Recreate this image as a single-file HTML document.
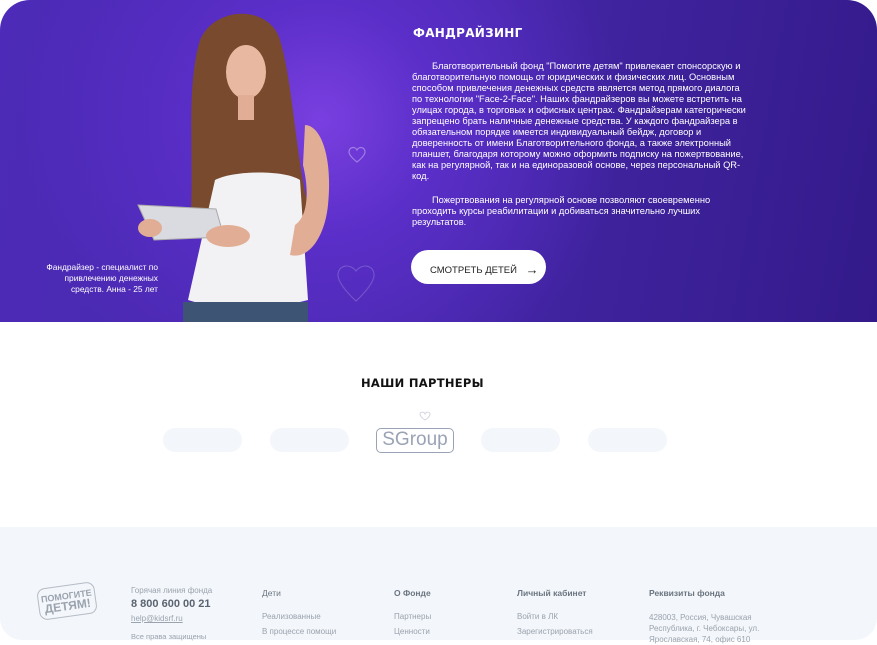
<!DOCTYPE html>
<html><head><meta charset="utf-8"><style>
*{margin:0;padding:0;box-sizing:border-box}
body{width:877px;height:640px;overflow:hidden;background:#fff;font-family:"Liberation Sans","DejaVu Sans",sans-serif;position:relative}
.hero{position:absolute;left:0;top:0;width:877px;height:322px;border-radius:30px 30px 0 0;overflow:hidden;
background:radial-gradient(circle at 320px 120px,#7a3fe0 0,#5a2ec8 120px,rgba(80,40,180,0) 300px),linear-gradient(100deg,#4d2bb8 0%,#4527a8 50%,#331a8a 100%)}
.t{position:absolute;color:#fff}
h2{position:absolute;font-family:"DejaVu Sans",sans-serif;font-weight:900;letter-spacing:.3px}
.p{position:absolute;left:412px;width:336px;font-size:9.3px;line-height:11px;color:#fff}
.p span{display:inline-block;width:20px}
.btn{position:absolute;left:411px;top:250px;width:135px;height:34px;background:#fff;border-radius:17px;font-size:9.5px;color:#222;padding:11px 0 0 19px}
.pill{position:absolute;top:428px;width:79px;height:24px;border-radius:12px;background:#f3f6fa}
.foot{position:absolute;left:0;top:527px;width:877px;height:113px;background:#f3f6fa;border-radius:0 0 22px 22px}
.f{position:absolute;font-size:8px;color:#9aa3ae}
.fh{position:absolute;font-size:8.5px;color:#6b7580;font-weight:bold}
</style></head><body>
<div class="hero">
<svg width="877" height="322" style="position:absolute;left:0;top:0">
<g fill="none" stroke="rgba(255,255,255,.35)" stroke-width="1.2">
<path d="M349 152c0-5 6-6 8-2 2-4 8-3 8 2 0 4-8 10-8 10s-8-6-8-10z"/>
<path d="M338 275c0-10 12-12 18-4 6-8 18-6 18 4 0 10-18 26-18 26s-18-16-18-26z" stroke="rgba(255,255,255,.18)"/>
</g>
<path d="M200 40c15-35 70-35 80 0 15 50 15 130 35 190 -30 20-100 20-125 0 5-70-5-140 10-190z" fill="#7a4a2e"/>
<path d="M215 180c20-10 70-10 85 0l8 120c-35 10-90 10-120 0z" fill="#f2f2f4"/>
<ellipse cx="246" cy="72" rx="20" ry="27" fill="#e8b8a0"/>
<rect x="238" y="95" width="16" height="25" fill="#e2ad95"/>
<path d="M305 125c15 0 28 30 23 80-3 30-18 55-38 50l5-30c15-10 13-40 8-60z" fill="#e2ad95"/>
<rect x="183" y="302" width="125" height="20" fill="#3d5475"/>
<path d="M138 205l78 4 8 28-70 3z" fill="#d9dbe0" stroke="#aaa" stroke-width="1"/>
<ellipse cx="150" cy="228" rx="12" ry="9" fill="#e2ad95"/>
<ellipse cx="228" cy="236" rx="22" ry="11" fill="#e2ad95"/>
</svg>
<div class="t" style="left:40px;top:262px;width:118px;font-size:8.4px;line-height:11px;text-align:right">Фандрайзер - специалист по привлечению денежных средств. Анна - 25 лет</div>
<h2 style="left:413px;top:26px;font-size:12px;color:#fff">ФАНДРАЙЗИНГ</h2>
<div class="p" style="top:61px"><span></span>Благотворительный фонд "Помогите детям" привлекает спонсорскую и благотворительную помощь от юридических и физических лиц. Основным способом привлечения денежных средств является метод прямого диалога по технологии "Face-2-Face". Наших фандрайзеров вы можете встретить на улицах города, в торговых и офисных центрах. Фандрайзерам категорически запрещено брать наличные денежные средства. У каждого фандрайзера в обязательном порядке имеется индивидуальный бейдж, договор и доверенность от имени Благотворительного фонда, а также электронный планшет, благодаря которому можно оформить подписку на пожертвование, как на регулярной, так и на единоразовой основе, через персональный QR-код.</div>
<div class="p" style="top:195px;width:315px"><span></span>Пожертвования на регулярной основе позволяют своевременно проходить курсы реабилитации и добиваться значительно лучших результатов.</div>
<div class="btn">СМОТРЕТЬ ДЕТЕЙ <span style="font-size:13px;font-weight:bold;margin-left:6px;position:relative;top:1px">→</span></div>
</div>
<h2 style="left:361px;top:376px;font-size:11.5px;color:#111">НАШИ ПАРТНЕРЫ</h2>
<svg width="12" height="10" style="position:absolute;left:419px;top:411px"><path d="M1 3c0-2 4-3 5 0 1-3 5-2 5 0 0 3-5 6-5 6s-5-3-5-6z" fill="none" stroke="#ccd" stroke-width=".8"/></svg>
<div class="pill" style="left:163px"></div><div class="pill" style="left:270px"></div>
<div style="position:absolute;left:376px;top:428px;width:78px;height:25px;border:1.3px solid #9aa3b5;border-radius:5px;color:#9aa3b5;font-size:19px;line-height:22px;text-align:center">SGroup</div>
<div class="pill" style="left:481px"></div><div class="pill" style="left:588px"></div>
<div class="foot">
<div style="position:absolute;left:38px;top:58px;width:58px;height:32px;border:1.5px solid #b5bcc6;border-radius:8px;transform:rotate(-8deg);color:#9aa3ae;font-weight:900;font-size:9px;line-height:10px;text-align:center;padding-top:5px">ПОМОГИТЕ<br><span style="font-size:12px">ДЕТЯМ!</span></div>
<div class="f" style="left:131px;top:59px">Горячая линия фонда</div>
<div style="position:absolute;left:131px;top:71px;font-size:11px;font-weight:bold;color:#5a6470">8 800 600 00 21</div>
<div class="f" style="left:131px;top:87px;text-decoration:underline">help@kidsrf.ru</div>
<div class="f" style="left:131px;top:105px;font-size:7.5px">Все права защищены</div>
<div class="fh" style="left:262px;top:61px;font-weight:normal">Дети</div>
<div class="f" style="left:262px;top:85px">Реализованные</div><div class="f" style="left:262px;top:100px">В процессе помощи</div>
<div class="fh" style="left:394px;top:61px">О Фонде</div>
<div class="f" style="left:394px;top:85px">Партнеры</div><div class="f" style="left:394px;top:100px">Ценности</div>
<div class="fh" style="left:517px;top:61px">Личный кабинет</div>
<div class="f" style="left:517px;top:85px">Войти в ЛК</div><div class="f" style="left:517px;top:100px">Зарегистрироваться</div>
<div class="fh" style="left:649px;top:61px">Реквизиты фонда</div>
<div class="f" style="left:649px;top:85px;width:130px;line-height:11px">428003, Россия, Чувашская Республика, г. Чебоксары, ул. Ярославская, 74, офис 610</div>
</div>
</body></html>
